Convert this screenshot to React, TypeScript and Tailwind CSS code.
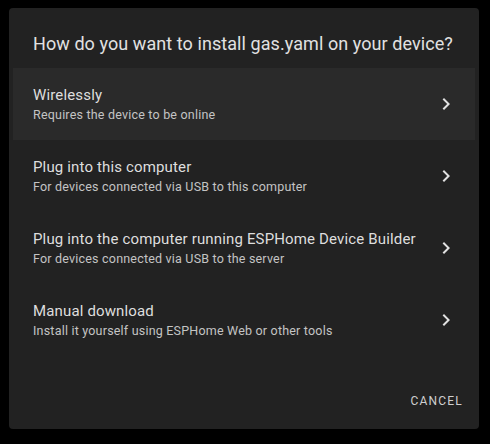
import React from 'react';

interface InstallOption {
  title: string;
  subtitle: string;
}

const options: InstallOption[] = [
  { title: 'Wirelessly', subtitle: 'Requires the device to be online' },
  { title: 'Plug into this computer', subtitle: 'For devices connected via USB to this computer' },
  { title: 'Plug into the computer running ESPHome Device Builder', subtitle: 'For devices connected via USB to the server' },
  { title: 'Manual download', subtitle: 'Install it yourself using ESPHome Web or other tools' },
];

const Chevron = () => (
  <svg width="24" height="24" viewBox="0 0 24 24" className="shrink-0">
    <path d="M8.59,16.58L13.17,12L8.59,7.41L10,6L16,12L10,18L8.59,16.58Z" fill="#e1e1e1" />
  </svg>
);

const App = () => {
  return (
    <div
      className="w-[490px] h-[444px] bg-black pt-2 px-[9px]"
      style={{ fontFamily: 'Roboto, "Noto Sans", sans-serif' }}
    >
      <div className="w-[470px] h-[421px] bg-[#222222] rounded flex flex-col">
        {/* タイトル */}
        <h2 className="px-6 pt-[23px] pb-[12px] text-[18px] leading-[25px] tracking-[0.004em] text-[#e1e1e1] whitespace-nowrap">
          How do you want to install gas.yaml on your device?
        </h2>

        <ul className="px-1">
          {options.map((opt, index) => (
            <li
              key={index}
              className={`h-[72px] flex items-center pl-5 pr-[17px] ${index === 0 ? 'bg-[#2a2a2a]' : ''}`}
            >
              <div className="flex-grow min-w-0">
                <div className="text-[15px] leading-[22px] tracking-[0.01em] text-[#dedede]">{opt.title}</div>
                <div className="text-[12.5px] leading-[18px] tracking-[0.016em] text-[#c4c4c4]">{opt.subtitle}</div>
              </div>
              <Chevron />
            </li>
          ))}
        </ul>

        <div className="flex-grow flex items-end justify-end pr-[8px] pb-[10px]">
          <button className="h-9 px-2 text-[12px] tracking-[0.1em] text-[#cfcfcf]">CANCEL</button>
        </div>
      </div>
    </div>
  );
};

export default App;
